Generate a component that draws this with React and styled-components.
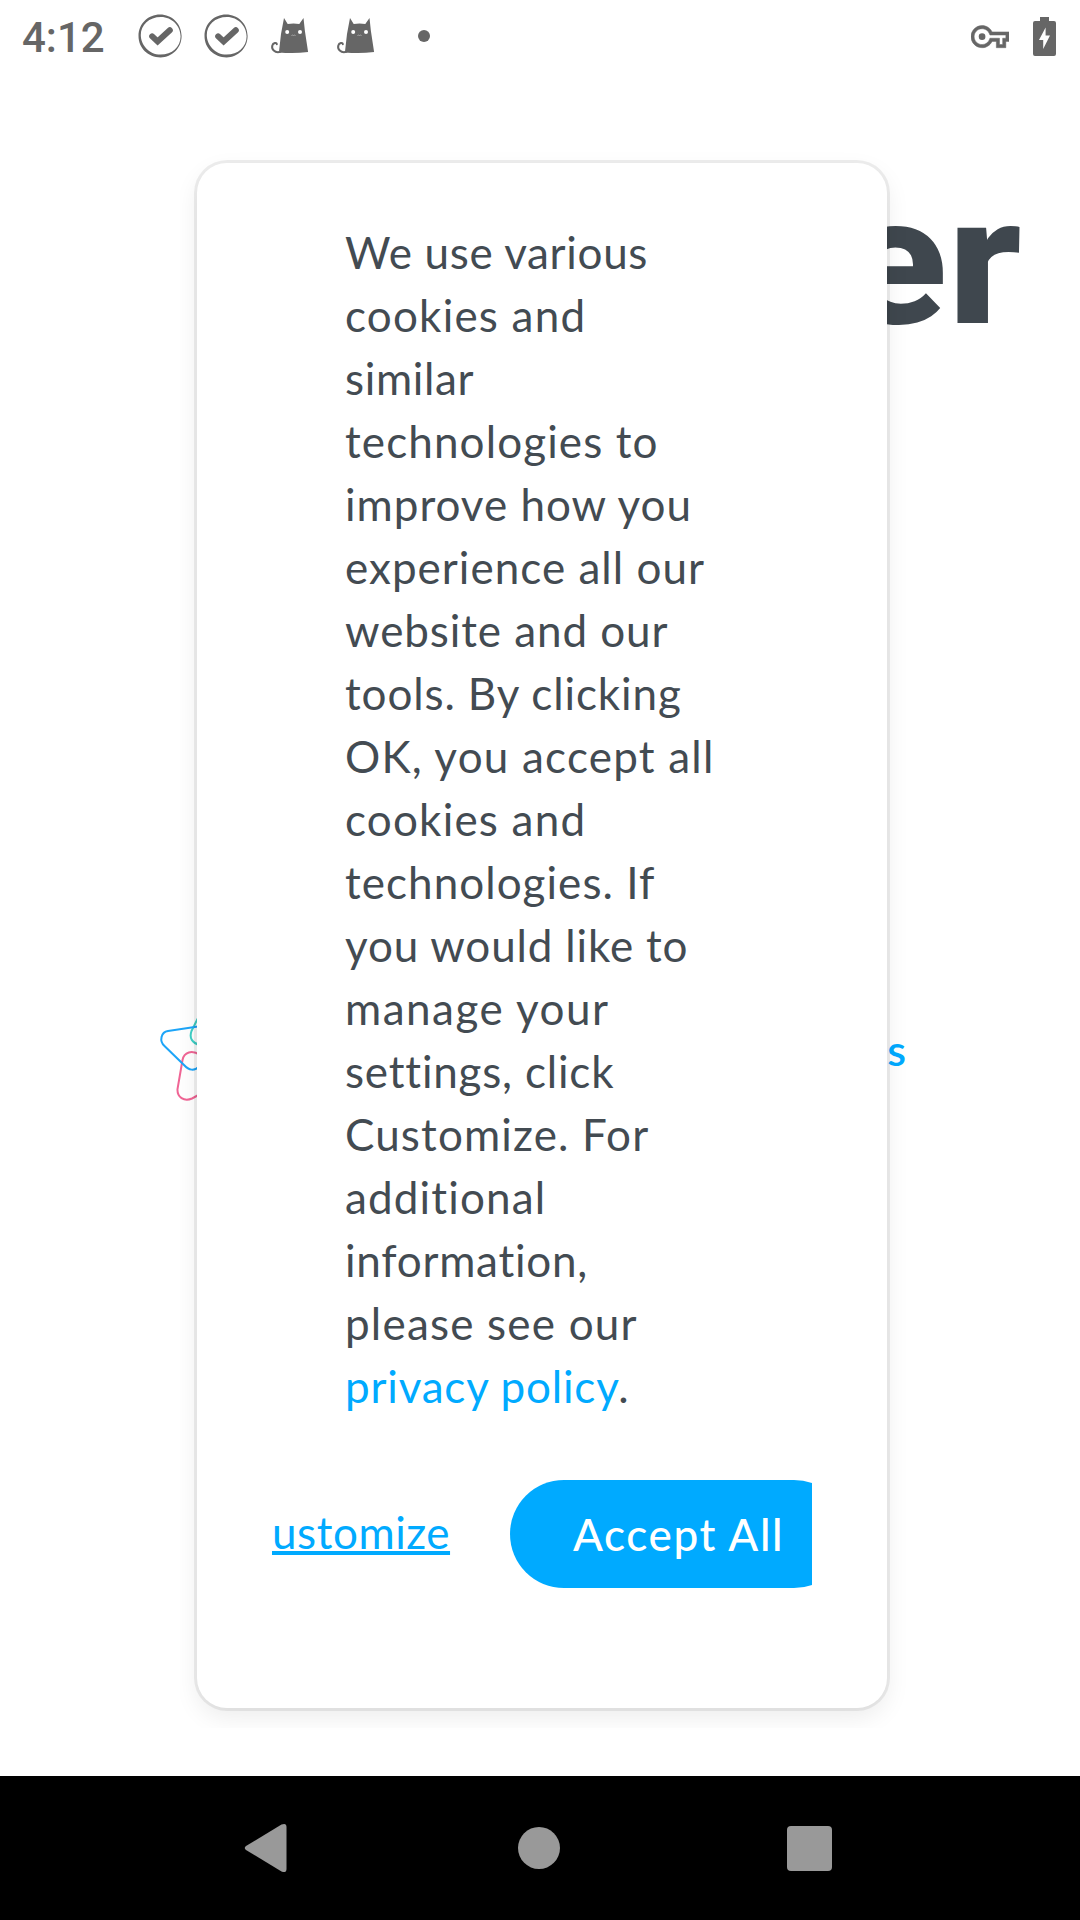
import React from "react";
import styled, { createGlobalStyle } from "styled-components";

const Global = createGlobalStyle`
  * { box-sizing: border-box; }
  body { margin: 0; background: #fff; }
`;

const Screen = styled.div`
  width: 1080px;
  height: 1920px;
  display: flex;
  flex-direction: column;
  overflow: hidden;
  background: #fff;
  color: #3f474e;
  font-family: Lato, "Open Sans", sans-serif;
`;

const StatusBar = styled.header`
  flex: none;
  height: 72px;
  padding: 0 24px 0 22px;
  display: flex;
  align-items: center;
  justify-content: space-between;
  color: #666;
`;

const StatusGroup = styled.div`
  display: flex;
  align-items: center;
  gap: ${(p) => p.$gap}px;
`;

const Clock = styled.span`
  width: 93.5px;
  font: 500 42px/50px Roboto, sans-serif;
  padding-top: 3px;
`;

const Icon = styled.svg`
  display: block;
  flex: none;
  fill: currentColor;
`;

const Dot = styled.span`
  width: 12px;
  height: 12px;
  margin-left: 16.5px;
  border-radius: 50%;
  background: currentColor;
`;

const Main = styled.main`
  position: relative;
  flex: 1;
  padding-top: 100px;
  overflow: hidden;
`;

const Title = styled.h1`
  margin: 0;
  padding-right: 58px;
  font: 800 180px/180px Roboto, sans-serif;
  text-align: right;
  span {
    display: inline-block;
    transform: scaleX(1.11);
    transform-origin: right;
  }
`;

const BrandRow = styled.div`
  display: flex;
  align-items: flex-start;
  justify-content: space-between;
  margin-top: 666px;
  padding: 0 174px 0 158px;
`;

const BrandLink = styled.a`
  margin-top: 10px;
  font-size: 43px;
  font-weight: 600;
  line-height: 44px;
  color: #00aaff;
`;

const Overlay = styled.div`
  position: absolute;
  top: 0;
  left: 180px;
  width: 726px;
  height: 1656px;
  padding: 91px 19px 20px 17px;
  overflow: hidden;
`;

const Card = styled.section`
  height: 1545px;
  padding: 58px 75px 0;
  border-radius: 30px;
  background: #fff;
  box-shadow: 0 0 0 3px rgba(0, 0, 0, 0.065), 0 9px 24px rgba(0, 0, 0, 0.08);
`;

const Message = styled.p`
  margin: 0;
  padding-left: 73px;
  font-size: 44px;
  line-height: 63px;
  color: #434b52;
`;

const Line = styled.span`
  display: block;
  white-space: nowrap;
  letter-spacing: ${(p) => p.$track}px;
`;

const PolicyLink = styled.a`
  color: #00aaff;
`;

const Actions = styled.div`
  display: flex;
  align-items: flex-start;
  gap: 60px;
  height: 108px;
  margin-top: 62px;
  overflow: hidden;
`;

const CustomizeLink = styled.a`
  flex: none;
  width: 178px;
  margin-top: 21px;
  font-size: 44px;
  line-height: 63px;
  letter-spacing: 0.55px;
  white-space: nowrap;
  color: #00aaff;
  text-decoration: underline;
  text-decoration-thickness: 4px;
  text-underline-offset: 2px;
  text-decoration-skip-ink: none;
`;

const AcceptButton = styled.button`
  flex: none;
  width: 338px;
  height: 108px;
  padding: 0 0 0 63px;
  border: 0;
  border-radius: 54px;
  background: #00aaff;
  color: #fff;
  font: 500 44px/107px Lato, sans-serif;
  letter-spacing: 1.62px;
  text-align: left;
  white-space: nowrap;
`;

const NavBar = styled.nav`
  flex: none;
  height: 144px;
  display: flex;
  align-items: center;
  justify-content: space-between;
  padding: 0 248px 0 244px;
  background: #000;
  color: #999;
`;

const HomeIcon = styled(Icon)`
  margin-left: 3px;
`;

const CheckIcon = () => (
  <Icon width="44" height="44" viewBox="0 0 44 44">
    <path fillRule="evenodd" d="M22 .6C34 .6 43.6 10 43.6 22S34 43.4 22.6 43.4C10 43.4.5 34 .5 22S10 .6 22 .6ZM23 3C11 3 2.800 11 2.800 21S11 40.600 22.500 40.600C34 40.600 42.600 33 42.600 22.500S34 3 23 3Z" />
    <path d="M14.200 22.400 19.600 27.400 31.800 16.200" fill="none" stroke="currentColor" strokeWidth="6" strokeLinecap="round" />
  </Icon>
);

const CatIcon = () => (
  <Icon width="44" height="44" viewBox="1.5 0 44 44">
    <path d="M15.500 4 19.200 10Q25 9 30.800 10L35 4 36.400 17 39.600 38Q25 40 10.400 38.400L12.500 20Z" />
    <path d="M12 37.800C6 39.500 2.800 35 3.800 31.500 4.600 28.800 8.300 28 8.300 30.200" fill="none" stroke="currentColor" strokeWidth="2" strokeLinecap="round" />
    <circle cx="18.700" cy="18" r="2" fill="#fff" />
    <circle cx="31.500" cy="18" r="2" fill="#fff" />
    <path d="M23 21.500q1-.8 2 0 1-.8 2 0" fill="none" stroke="#aaa" strokeWidth="1" />
  </Icon>
);

const KeyIcon = () => (
  <Icon width="38" height="38" viewBox="0 -.4 24 24">
    <path stroke="currentColor" strokeWidth=".3" d="M22 19h-6v-4h-2.680c-1.140 2.420-3.600 4-6.320 4-3.860 0-7-3.140-7-7s3.140-7 7-7c2.720 0 5.170 1.580 6.320 4H24v6h-2v4zm-4-2h2v-4h2v-2H11.940l-.23-.67C11.010 8.340 9.110 7 7 7c-2.760 0-5 2.240-5 5s2.240 5 5 5c2.110 0 4.010-1.340 4.710-3.330l.23-.67H18v4z" />
    <circle cx="7" cy="12" r="2.100" />
  </Icon>
);

const BatteryIcon = () => (
  <Icon width="23" height="39" viewBox="0 0 23 39">
    <path fillRule="evenodd" d="M7 0h9v4h5a2 2 0 0 1 2 2v31a2 2 0 0 1-2 2H2a2 2 0 0 1-2-2V6a2 2 0 0 1 2-2h5ZM12.600 10.500 6 23h4.200v9L17 18.500h-4.400Z" />
  </Icon>
);

const StarLogo = () => (
  <Icon width="84" height="84" viewBox="158 1018 84 84">
    <g fill="none" strokeWidth="2" strokeLinecap="round">
      <path stroke="#3fd0c6" d="M204 1006 191.500 1031C189 1038 192 1043 200 1045L226 1042" />
      <path stroke="#f06595" d="M216 1066 200 1055C192 1049.500 184 1052 182.500 1060L177.500 1089C177 1097 184 1102 192 1098.500L226 1080" />
      <path stroke="#1da5f8" d="M228 1022 168 1031C161 1032 159 1041 164.500 1046L184 1065C189 1070.500 194 1071.500 200 1066L226 1040" />
    </g>
  </Icon>
);

const LINES = [
  ["We use various", 0.66],
  ["cookies and", 1.2],
  ["similar", 0.65],
  ["technologies to", 1.12],
  ["improve how you", 1],
  ["experience all our", 1.02],
  ["website and our", 0.91],
  ["tools. By clicking", 0.89],
  ["OK, you accept all", 1.21],
  ["cookies and", 1.2],
  ["technologies. If", 1.05],
  ["you would like to", 0.84],
  ["manage your", 1.5],
  ["settings, click", 0.8],
  ["Customize. For", 1.15],
  ["additional", 1.15],
  ["information,", 0.75],
  ["please see our", 1.2],
];

export default function App() {
  return (
    <Screen>
      <Global />
      <StatusBar>
        <StatusGroup $gap={22}>
          <Clock>4:12</Clock>
          <CheckIcon />
          <CheckIcon />
          <CatIcon />
          <CatIcon />
          <Dot />
        </StatusGroup>
        <StatusGroup $gap={24.5}>
          <KeyIcon />
          <BatteryIcon />
        </StatusGroup>
      </StatusBar>
      <Main>
        <Title><span>er</span></Title>
        <BrandRow>
          <StarLogo />
          <BrandLink>s</BrandLink>
        </BrandRow>
        <Overlay>
          <Card>
            <Message>
              {LINES.map(([text, track], i) => (
                <Line key={i} $track={track}>{text} </Line>
              ))}
              <Line $track={0.8}>
                <PolicyLink>privacy policy</PolicyLink>.
              </Line>
            </Message>
            <Actions>
              <CustomizeLink>ustomize</CustomizeLink>
              <AcceptButton>Accept All</AcceptButton>
            </Actions>
          </Card>
        </Overlay>
      </Main>
      <NavBar>
        <Icon width="43" height="50" viewBox="0 0 43 50">
          <path d="M2 23 37.500 1.500Q42.500 -.5 42.500 4V46Q42.500 50.500 37.500 48.500L2 27Q-.5 25 2 23Z" />
        </Icon>
        <HomeIcon width="42" height="42" viewBox="0 0 42 42">
          <circle cx="21" cy="21" r="21" />
        </HomeIcon>
        <Icon width="45" height="45" viewBox="0 0 45 45">
          <rect width="45" height="45" rx="4" />
        </Icon>
      </NavBar>
    </Screen>
  );
}
